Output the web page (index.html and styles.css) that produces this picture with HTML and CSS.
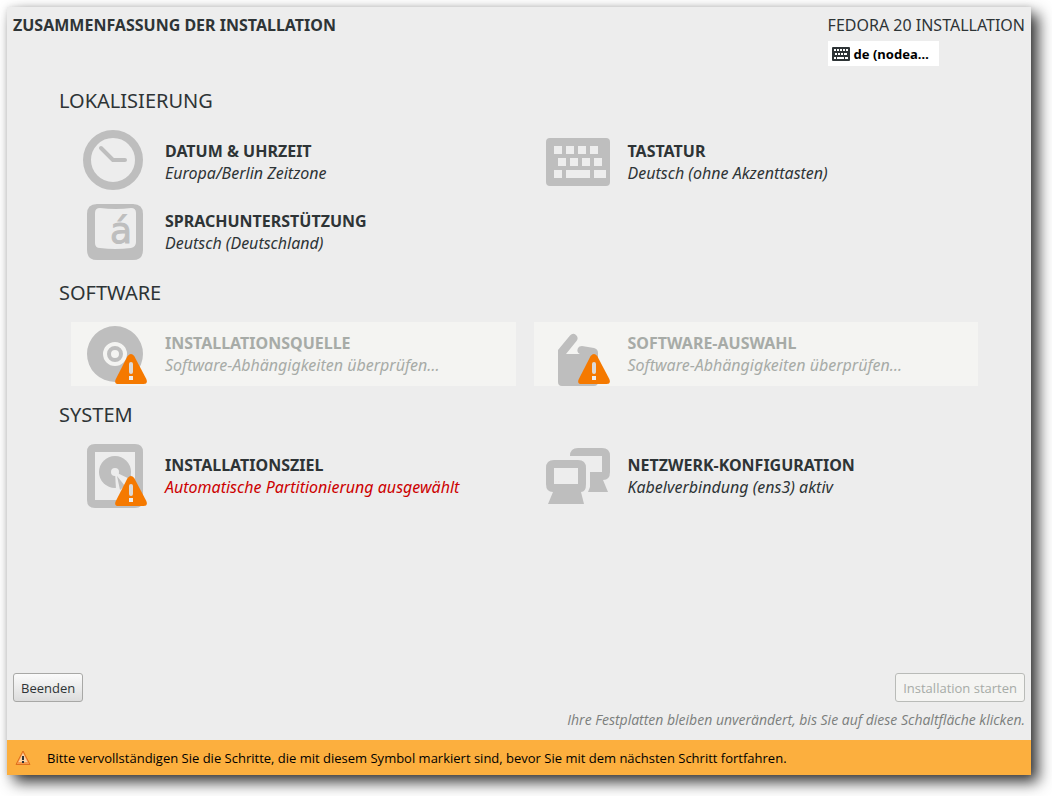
FILE: index.html
```html
<!DOCTYPE html>
<html lang="de">
<head>
<meta charset="utf-8">
<title>Zusammenfassung der Installation</title>
<meta name="viewport" content="width=device-width, initial-scale=1">
<link rel="stylesheet" href="styles.css">
</head>
<body>
<svg class="sprite" aria-hidden="true">
  <symbol id="warning" viewBox="0 0 32 30">
    <path fill="#f57900" d="M12.6 1.9Q16-1.7 19.2 1.9L31.3 25Q33.2 30 28.6 30H3.4Q-1 30 .6 25.6Z"/>
    <path stroke="#dcdad8" stroke-width="4" stroke-linecap="round" d="M16 10v8"/>
    <path fill="#ededed" d="M14 22h4v4h-4z"/>
  </symbol>
</svg>
<div class="window">
  <header class="topbar">
    <h1 class="title">ZUSAMMENFASSUNG DER INSTALLATION</h1>
    <div class="product">
      <span class="product-name">FEDORA 20 INSTALLATION</span>
      <button class="layout" type="button">
        <svg class="layout-icon" viewBox="0 0 18 14" aria-hidden="true">
          <rect width="18" height="14" rx="1" fill="#2e3436"/>
          <path fill="#fff" d="M2 2h2v2H2zM5 2h2v2H5zM8 2h2v2H8zM11 2h2v2h-2zM14 2h2v2h-2zM3 6h2v2H3zM6 6h2v2H6zM9 6h2v2H9zM12 6h3v2h-3zM2 10h2v2H2zM5 10h7v2H5zM13 10h3v2h-3z"/>
        </svg>
        de (nodea…
      </button>
    </div>
  </header>

  <main class="hub">
    <section class="category">
      <h2 class="heading">LOKALISIERUNG</h2>
      <div class="spokes">
        <button class="spoke" type="button">
          <svg class="icon" viewBox="0 0 64 64" fill="none" stroke="#bebebe" aria-hidden="true">
            <circle cx="30" cy="30" r="26" stroke-width="8"/>
            <path stroke-width="4" stroke-linecap="round" stroke-linejoin="round" d="M18 18l12 12h12"/>
          </svg>
          <span class="labels"><span class="name">DATUM &amp; UHRZEIT</span><span class="status">Europa/Berlin Zeitzone</span></span>
        </button>
        <button class="spoke" type="button">
          <svg class="icon" viewBox="0 0 64 64" aria-hidden="true">
            <path fill="#bebebe" fill-rule="evenodd" d="M4 8h56q4 0 4 4v40q0 4-4 4H4q-4 0-4-4V12q0-4 4-4zM8 16v8h8v-8zM20 16v8h8v-8zM32 16v8h8v-8zM44 16v8h8v-8zM12 28v8h8v-8zM24 28v8h8v-8zM36 28v8h8v-8zM48 28v8h8v-8zM8 40v8h8v-8zM20 40v8h24v-8zM48 40v8h12v-8z"/>
          </svg>
          <span class="labels"><span class="name">TASTATUR</span><span class="status">Deutsch (ohne Akzenttasten)</span></span>
        </button>
        <button class="spoke" type="button">
          <svg class="icon" viewBox="0 0 64 64" aria-hidden="true">
            <path fill="#bebebe" fill-rule="evenodd" d="M14 4h36q10 0 10 10v36q0 10-10 10H14Q4 60 4 50V14Q4 4 14 4zM17 8q-5 0-5 5v30q0 5 5 5q15 2 31 0q5-1 5-6V13q0-5-5-5q-15 2-31 0z"/>
            <text class="icon-letter" x="27" y="43">á</text>
          </svg>
          <span class="labels"><span class="name">SPRACHUNTERSTÜTZUNG</span><span class="status">Deutsch (Deutschland)</span></span>
        </button>
      </div>
    </section>

    <section class="category">
      <h2 class="heading">SOFTWARE</h2>
      <div class="spokes">
        <button class="spoke" type="button" disabled>
          <svg class="icon" viewBox="0 0 64 64" aria-hidden="true">
            <path fill="#bebebe" fill-rule="evenodd" d="M32 4a28 28 0 1 0 0 56a28 28 0 1 0 0-56zM32 20a12 12 0 1 1 0 24a12 12 0 1 1 0-24z"/>
            <circle cx="32" cy="32" r="6" fill="none" stroke="#bebebe" stroke-width="4"/>
            <use href="#warning" x="32" y="32" width="32" height="30"/>
          </svg>
          <span class="labels"><span class="name">INSTALLATIONSQUELLE</span><span class="status">Software-Abhängigkeiten überprüfen…</span></span>
        </button>
        <button class="spoke" type="button" disabled>
          <svg class="icon" viewBox="0 0 64 64" aria-hidden="true">
            <path fill="#bebebe" d="M12 28L24 13.500q3-3 6-.5q3 3 .5 6L20 32h14q-4-2-2-6q1-2 4-2l12 2q4 1 4 5v29q0 4-4 4H16q-4 0-4-4z"/>
            <use href="#warning" x="32" y="32" width="32" height="30"/>
          </svg>
          <span class="labels"><span class="name">SOFTWARE-AUSWAHL</span><span class="status">Software-Abhängigkeiten überprüfen…</span></span>
        </button>
      </div>
    </section>

    <section class="category">
      <h2 class="heading">SYSTEM</h2>
      <div class="spokes">
        <button class="spoke" type="button">
          <svg class="icon" viewBox="0 0 64 64" aria-hidden="true">
            <path fill="#bebebe" fill-rule="evenodd" d="M12 0h40q8 0 8 8v48q0 8-8 8H12q-8 0-8-8V8q0-8 8-8zM12 8v48h40V8z"/>
            <circle cx="32" cy="28" r="16" fill="#bebebe"/>
            <path fill="#ededed" d="M32 28l1 17h8l8-9z"/>
            <circle cx="32" cy="28" r="4" fill="#ededed"/>
            <path fill="#bebebe" d="M34 32l3 14 5-4zM36 29l12 5v-3z"/>
            <use href="#warning" x="32" y="32" width="32" height="30"/>
          </svg>
          <span class="labels"><span class="name">INSTALLATIONSZIEL</span><span class="status status-alert">Automatische Partitionierung ausgewählt</span></span>
        </button>
        <button class="spoke" type="button">
          <svg class="icon" viewBox="0 0 64 64" fill="#bebebe" aria-hidden="true">
            <path fill-rule="evenodd" d="M8 16h24q8 0 8 8v16q0 8-5 8l3 12H2l5-12q-7 0-7-8V24q0-8 8-8zM8 24v16h24V24z"/>
            <path d="M24 12q0-8 8-8h24q8 0 8 8v16q0 8-7 8l5 12H42l2-5V28h12V12z"/>
          </svg>
          <span class="labels"><span class="name">NETZWERK-KONFIGURATION</span><span class="status">Kabelverbindung (ens3) aktiv</span></span>
        </button>
      </div>
    </section>
  </main>

  <footer class="actions">
    <div class="action-row">
      <button class="action" type="button">Beenden</button>
      <button class="action" type="button" disabled>Installation starten</button>
    </div>
    <p class="hint">Ihre Festplatten bleiben unverändert, bis Sie auf diese Schaltfläche klicken.</p>
  </footer>

  <div class="infobar" role="status">
    <svg class="infobar-icon" viewBox="0 0 16 16" aria-hidden="true">
      <path fill="#f79a4c" stroke="#e0701c" stroke-linejoin="round" d="M8 1L15 14.500H1z"/>
      <path fill="#fbd3a6" d="M8 3l4.500 9h-9z"/>
      <path fill="#2e3436" d="M7 6h2v4H7zM7 11h2v2H7z"/>
    </svg>
    <span>Bitte vervollständigen Sie die Schritte, die mit diesem Symbol markiert sind, bevor Sie mit dem nächsten Schritt fortfahren.</span>
  </div>
</div>
</body>
</html>
```
FILE: styles.css
```css
* {
  box-sizing: border-box;
}

body {
  margin: 0;
  padding: 7px 21px 21px 7px;
  min-height: 100vh;
  display: flex;
  background: #fff;
  color: #2e3436;
  font-family: "Noto Sans", "Open Sans", sans-serif;
  font-size: 13px;
}

button {
  font: inherit;
  color: inherit;
  cursor: pointer;
}

.sprite {
  position: absolute;
  width: 0;
  height: 0;
}

.window {
  flex: 1;
  display: flex;
  flex-direction: column;
  background: #ededed;
  box-shadow: 7px 7px 14px rgba(0, 0, 0, 0.8), 0 0 6px rgba(0, 0, 0, 0.1);
}

.topbar {
  display: flex;
  justify-content: space-between;
  padding: 6px 6px 0;
}

.title {
  margin: 0;
  font-size: 16px;
  line-height: 24px;
  font-weight: 700;
}

.product {
  display: flex;
  flex-direction: column;
  align-items: flex-start;
  gap: 4px;
}

.product-name {
  font-size: 16px;
  line-height: 24px;
}

.layout {
  display: flex;
  align-items: center;
  gap: 4px;
  height: 25px;
  padding: 0 10px 0 4px;
  border: 0;
  background: #fff;
  color: #000;
  font-weight: 700;
}

.layout-icon {
  width: 18px;
  height: 14px;
}

.hub {
  flex: 1;
  padding: 6px 53px 0 52px;
}

.heading {
  margin: 0;
  font-size: 20px;
  line-height: 58px;
  font-weight: 400;
}

.spokes {
  display: grid;
  grid-template-columns: 1fr 1fr;
  gap: 6px 18px;
  padding-left: 12px;
}

.spoke {
  display: flex;
  gap: 18px;
  min-height: 64px;
  padding: 0 12px;
  border: 0;
  background: transparent;
  text-align: left;
}

.spoke:disabled {
  background: #f4f4f2;
  color: #a7aba7;
}

.icon {
  flex: none;
  width: 64px;
  height: 64px;
}

.icon-letter {
  fill: #bebebe;
  stroke: #bebebe;
  font: 400 36px "DejaVu Sans", sans-serif;
}

.labels {
  display: flex;
  flex-direction: column;
  padding-top: 10px;
  font-size: 16px;
  line-height: 22px;
}

.name {
  font-weight: 700;
}

.status {
  font-style: italic;
}

.status-alert {
  color: #cc0000;
}

.actions {
  padding: 0 6px 10px;
}

.action-row {
  display: flex;
  justify-content: space-between;
}

.action {
  height: 29px;
  padding: 0 7px;
  border: 1px solid #a8a8a6;
  border-radius: 3px;
  background: linear-gradient(#fbfbfb, #dcdcdc);
  font-family: "Open Sans", sans-serif;
}

.action:disabled {
  border-color: #b9bbb8;
  background: #f4f4f2;
  color: #a7aba7;
}

.hint {
  margin: 8px 0 0;
  color: #7b7e7c;
  font-family: "Open Sans", sans-serif;
  font-size: 14px;
  font-style: italic;
  line-height: 20px;
  text-align: right;
}

.infobar {
  display: flex;
  align-items: center;
  gap: 16px;
  min-height: 35px;
  padding: 0 8px;
  background: #fcaf3e;
  color: #000;
  font-family: "Open Sans", sans-serif;
}

.infobar-icon {
  flex: none;
  width: 16px;
  height: 16px;
}
```
